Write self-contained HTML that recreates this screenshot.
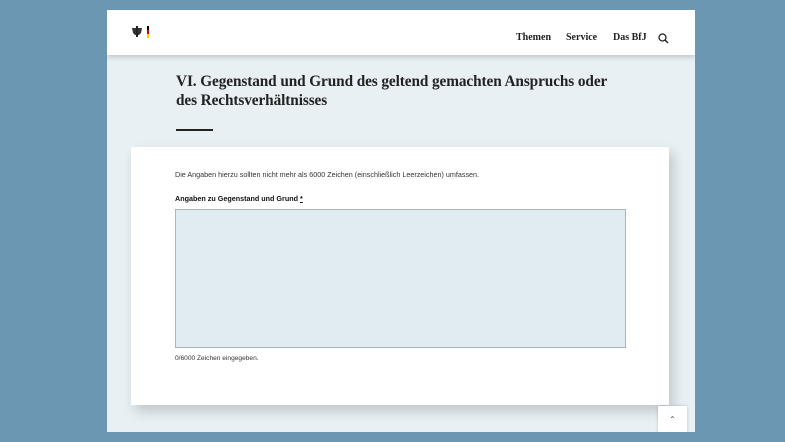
<!DOCTYPE html>
<html><head><meta charset="utf-8"><style>
body{margin:0;width:785px;height:442px;background:#6b97b2;position:relative;overflow:hidden;font-family:"Liberation Sans",sans-serif}
.win{position:absolute;left:107px;top:10px;width:588px;height:422px;background:#e8f0f4;overflow:hidden}
.hdr{position:absolute;left:0;top:0;width:588px;height:45px;background:#fff;box-shadow:0 2px 5px rgba(0,0,0,.18)}
.nav{position:absolute;top:22px;font-family:"Liberation Serif",serif;font-weight:bold;font-size:10px;color:#222}
h1{position:absolute;left:69px;top:62px;margin:0;font-family:"Liberation Serif",serif;font-weight:bold;font-size:15.3px;line-height:19px;color:#222;width:450px;letter-spacing:-0.1px}
.rule{position:absolute;left:69px;top:119px;width:37px;height:1.5px;background:#222}
.card{position:absolute;left:24px;top:137px;width:538px;height:258px;background:#fff;box-shadow:4px 6px 12px rgba(0,0,0,.18)}
.t{position:absolute;font-size:7.2px;color:#333}
.ta{position:absolute;left:44px;top:62px;width:449px;height:137px;background:#e1ecf2;border:1px solid #a9b6bd}
.up{position:absolute;left:551px;top:396px;width:29px;height:26px;background:#fff;box-shadow:0 0 3px rgba(0,0,0,.2);font-size:8px;text-align:center;line-height:28px;color:#555}
</style></head><body>
<div class="win">
<div class="hdr">
<svg style="position:absolute;left:24px;top:15px" width="22" height="14"><path d="M1 3h10l-1 5-2 2h-4l-2-2z" fill="#333"/><rect x="5" y="1" width="2" height="11" fill="#222"/><rect x="16" y="1" width="2" height="4" fill="#000"/><rect x="16" y="5" width="2" height="4" fill="#d00"/><rect x="16" y="9" width="2" height="4" fill="#fc0"/></svg>
<span class="nav" style="left:409px">Themen</span>
<span class="nav" style="left:459px">Service</span>
<span class="nav" style="left:506px">Das BfJ</span>
<svg style="position:absolute;left:551px;top:23px" width="11" height="11"><circle cx="4.5" cy="4.5" r="3.5" fill="none" stroke="#222" stroke-width="1.3"/><path d="M7 7l3 3" stroke="#222" stroke-width="1.4"/></svg>
</div>
<h1>VI. Gegenstand und Grund des geltend gemachten Anspruchs oder des Rechtsverhältnisses</h1>
<div class="rule"></div>
<div class="card">
<div class="t" style="left:44px;top:23px">Die Angaben hierzu sollten nicht mehr als 6000 Zeichen (einschließlich Leerzeichen) umfassen.</div>
<div class="t" style="left:44px;top:47px;font-weight:bold;color:#111">Angaben zu Gegenstand und Grund <u>*</u></div>
<div class="ta"></div>
<div class="t" style="left:44px;top:208px;font-size:6.6px">0/6000 Zeichen eingegeben.</div>
</div>
<div class="up">&#8963;</div>
</div>
</body></html>
